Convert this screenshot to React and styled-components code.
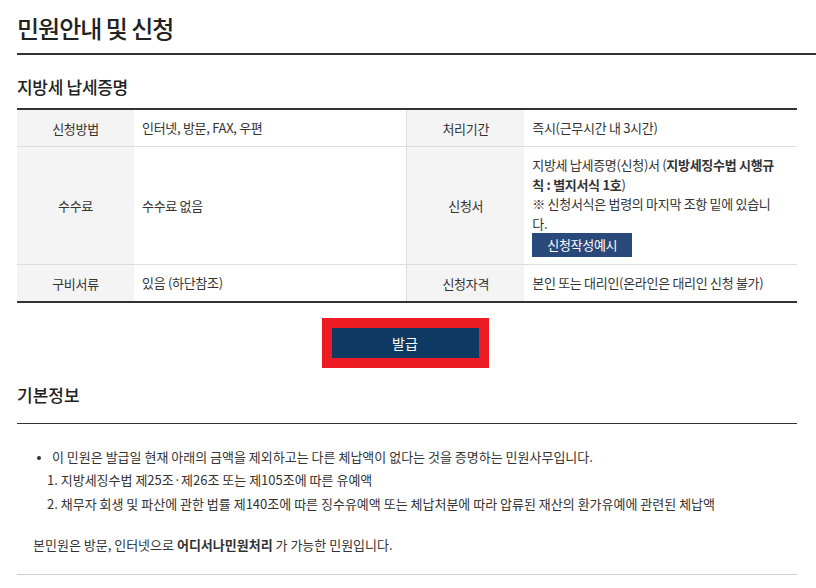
import styled, { createGlobalStyle } from 'styled-components';

const GlobalStyle = createGlobalStyle`
  body {
    margin: 0;
    background: #fff;
    font-family: "Noto Sans CJK KR", "Noto Sans", sans-serif;
    color: #333;
  }
`

const Page = () => {
  return (
    <Wrapper>
      <GlobalStyle />
      <PageTitle>민원안내 및 신청</PageTitle>
      <Content>
        <SubTitle>지방세 납세증명</SubTitle>
        <InfoTable>
          <tbody>
            <tr>
              <Th>신청방법</Th>
              <Td>인터넷, 방문, FAX, 우편</Td>
              <Th>처리기간</Th>
              <Td>즉시(근무시간 내 3시간)</Td>
            </tr>
            <tr>
              <Th>수수료</Th>
              <Td>수수료 없음</Td>
              <Th>신청서</Th>
              <Td tall>
                지방세 납세증명(신청)서 (<b>지방세징수법 시행규칙 : 별지서식 1호</b>)
                <br />※ 신청서식은 법령의 마지막 조항 밑에 있습니다.
                <SmallButton>신청작성예시</SmallButton>
              </Td>
            </tr>
            <tr>
              <Th>구비서류</Th>
              <Td>있음 (하단참조)</Td>
              <Th>신청자격</Th>
              <Td>본인 또는 대리인(온라인은 대리인 신청 불가)</Td>
            </tr>
          </tbody>
        </InfoTable>
        <ButtonRow>
          <Highlight>
            <IssueButton>발급</IssueButton>
          </Highlight>
        </ButtonRow>
        <SectionTitle>기본정보</SectionTitle>
        <InfoBody>
          <BulletList>
            <li>
              이 민원은 발급일 현재 아래의 금액을 제외하고는 다른 체납액이 없다는 것을 증명하는 민원사무입니다.
              <NumList>
                <li>1. 지방세징수법 제25조·제26조 또는 제105조에 따른 유예액</li>
                <li>2. 채무자 회생 및 파산에 관한 법률 제140조에 따른 징수유예액 또는 체납처분에 따라 압류된 재산의 환가유예에 관련된 체납액</li>
              </NumList>
            </li>
          </BulletList>
          <Note>본민원은 방문, 인터넷으로 <b>어디서나민원처리</b> 가 가능한 민원입니다.</Note>
        </InfoBody>
      </Content>
    </Wrapper>
  )
}

export default Page;

const Wrapper = styled.div`
  width: 816px;
  height: 588px;
  overflow: hidden;
  padding-left: 17px;
  box-sizing: border-box;
`

const PageTitle = styled.h1`
  margin: 0;
  padding-top: 13px;
  height: 55px;
  box-sizing: border-box;
  font-size: 24px;
  font-weight: 500;
  line-height: 30px;
  color: #222;
  letter-spacing: -1px;
  border-bottom: 2px solid #333;
`

const Content = styled.div`
  width: 780px;
`

const SubTitle = styled.h2`
  margin: 0;
  padding-top: 20px;
  height: 53px;
  box-sizing: border-box;
  font-size: 17px;
  font-weight: 500;
  line-height: 24px;
  color: #222;
  letter-spacing: -0.3px;
`

const InfoTable = styled.table`
  width: 780px;
  border-collapse: collapse;
  table-layout: fixed;
  border-top: 2px solid #333;
  border-bottom: 2px solid #333;
  font-size: 13px;
  letter-spacing: -0.3px;
`

const Th = styled.th`
  width: 117px;
  background: #f4f4f4;
  font-weight: 400;
  color: #333;
  height: 36px;
  padding: 0;
  border-bottom: 1px solid #ddd;
  border-left: 1px solid #ddd;
  &:first-child { border-left: none; }
`

const Td = styled.td`
  padding: ${p => (p.tall ? '8px 16px 7px 8px' : '0 8px')};
  color: #333;
  line-height: ${p => (p.tall ? '19.5px' : '22px')};
  border-bottom: 1px solid #ddd;
  b { font-weight: 700; }
`

const SmallButton = styled.span`
  display: block;
  width: fit-content;
  background: #29497a;
  color: #fff;
  font-size: 13px;
  line-height: 24px;
  padding: 0 15px;
`

const ButtonRow = styled.div`
  display: flex;
  justify-content: center;
  padding: 15px 4px 0 0;
`

const Highlight = styled.div`
  border: 10px solid #ed1c24;
  display: flex;
`

const IssueButton = styled.button`
  width: 147px;
  height: 30px;
  background: #0f3a63;
  border: none;
  color: #fff;
  font-family: inherit;
  font-size: 14px;
  padding: 0;
`

const SectionTitle = styled.h2`
  margin: 0;
  padding-top: 14px;
  height: 56px;
  box-sizing: border-box;
  font-size: 17px;
  font-weight: 500;
  line-height: 26px;
  color: #222;
  border-bottom: 1px solid #333;
`

const InfoBody = styled.div`
  padding: 21px 0 18px 16px;
  border-bottom: 1px solid #ccc;
  font-size: 13px;
  color: #333;
`

const BulletList = styled.ul`
  margin: 0;
  padding-left: 19px;
  line-height: 23px;
  li::marker { font-size: 10px; }
`

const NumList = styled.ol`
  list-style: none;
  margin: 0 0 0 -5px;
  padding: 0;
  & > li:last-child { margin-top: 1px; }
`

const Note = styled.p`
  margin: 19px 0 0 0;
  line-height: 22px;
  b { font-weight: 700; }
`
